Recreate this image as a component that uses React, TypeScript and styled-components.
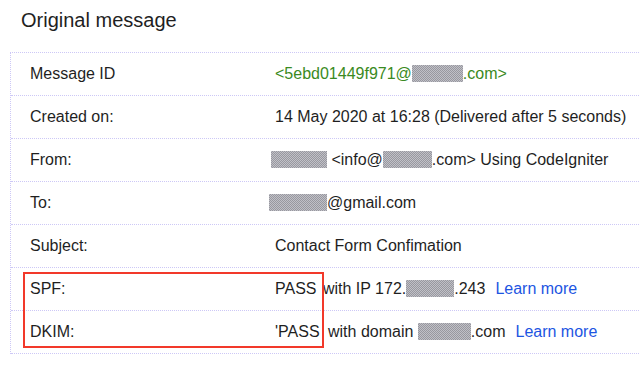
import React from 'react';
import styled, { createGlobalStyle } from 'styled-components';

const GlobalStyle = createGlobalStyle`
  html, body {
    margin: 0;
    padding: 0;
    background: #ffffff;
    overflow: hidden;
  }
  body {
    font-family: "Liberation Sans", Arial, sans-serif;
    color: #202124;
  }
`;

const Page = styled.div`
  width: 640px;
  height: 365px;
  overflow: hidden;
  padding-top: 9px;
  box-sizing: border-box;
`;

const Heading = styled.h1`
  margin: 0 0 20px 21px;
  font-size: 20px;
  line-height: 23px;
  font-weight: 400;
  color: #1f1f1f;
`;

const Table = styled.div`
  margin-left: 10px;
  width: 660px;
  border-top: 1px dotted #cdc8f6;
  border-left: 1px dotted #cdc8f6;
`;

const Row = styled.div`
  display: grid;
  grid-template-columns: 264px 1fr;
  align-items: center;
  height: 42px;
  border-bottom: 1px dotted #cdc8f6;
  font-size: 16px;
  line-height: 18px;
  white-space: nowrap;
`;

const Label = styled.div`
  padding-left: 19px;
  color: #1f1f1f;
`;

const Value = styled.div<{ $tone?: 'green' }>`
  color: ${({ $tone }) => ($tone === 'green' ? '#3a8a22' : '#1f1f1f')};
`;

// grey checker block hiding a private part of an address
const Redacted = styled.span<{ $w: number; $shift?: number }>`
  display: inline-block;
  width: ${({ $w }) => $w}px;
  height: 17px;
  margin-left: ${({ $shift = 0 }) => $shift}px;
  vertical-align: -3px;
  background-color: #acacb3;
  background-image: repeating-conic-gradient(#98989f 0% 25%, #c0c0c7 0% 50%);
  background-size: 2px 2px;
`;

const Verdict = styled.span<{ $gap?: number }>`
  margin-right: ${({ $gap = 0 }) => $gap}px;
`;

const LearnMore = styled.a`
  margin-left: 10px;
  color: #1d55e2;
  text-decoration: none;
  cursor: pointer;
`;

const AuthGroup = styled.div`
  position: relative;

  &::after {
    content: '';
    position: absolute;
    left: 12px;
    top: 4px;
    width: 301px;
    height: 76px;
    box-sizing: border-box;
    border: 2px solid #f2392a;
    pointer-events: none;
  }
`;

export default function App() {
  return (
    <Page>
      <GlobalStyle />
      <Heading>Original message</Heading>
      <Table>
        <Row>
          <Label>Message ID</Label>
          <Value $tone="green">
            &lt;5ebd01449f971@<Redacted $w={51} />.com&gt;
          </Value>
        </Row>
        <Row>
          <Label>Created on:</Label>
          <Value>14 May 2020 at 16:28 (Delivered after 5 seconds)</Value>
        </Row>
        <Row>
          <Label>From:</Label>
          <Value>
            <Redacted $w={56} $shift={-4} /> &lt;info@<Redacted $w={49} />.com&gt; Using CodeIgniter
          </Value>
        </Row>
        <Row>
          <Label>To:</Label>
          <Value>
            <Redacted $w={58} $shift={-6} />@gmail.com
          </Value>
        </Row>
        <Row>
          <Label>Subject:</Label>
          <Value>Contact Form Confimation</Value>
        </Row>
        <AuthGroup>
          <Row>
            <Label>SPF:</Label>
            <Value>
              <Verdict $gap={2}>PASS</Verdict> with IP 172.<Redacted $w={48} />.243
              <LearnMore>Learn more</LearnMore>
            </Value>
          </Row>
          <Row>
            <Label>DKIM:</Label>
            <Value>
              <Verdict $gap={4}>'PASS</Verdict> with domain <Redacted $w={53} />.com
              <LearnMore>Learn more</LearnMore>
            </Value>
          </Row>
        </AuthGroup>
      </Table>
    </Page>
  );
}
